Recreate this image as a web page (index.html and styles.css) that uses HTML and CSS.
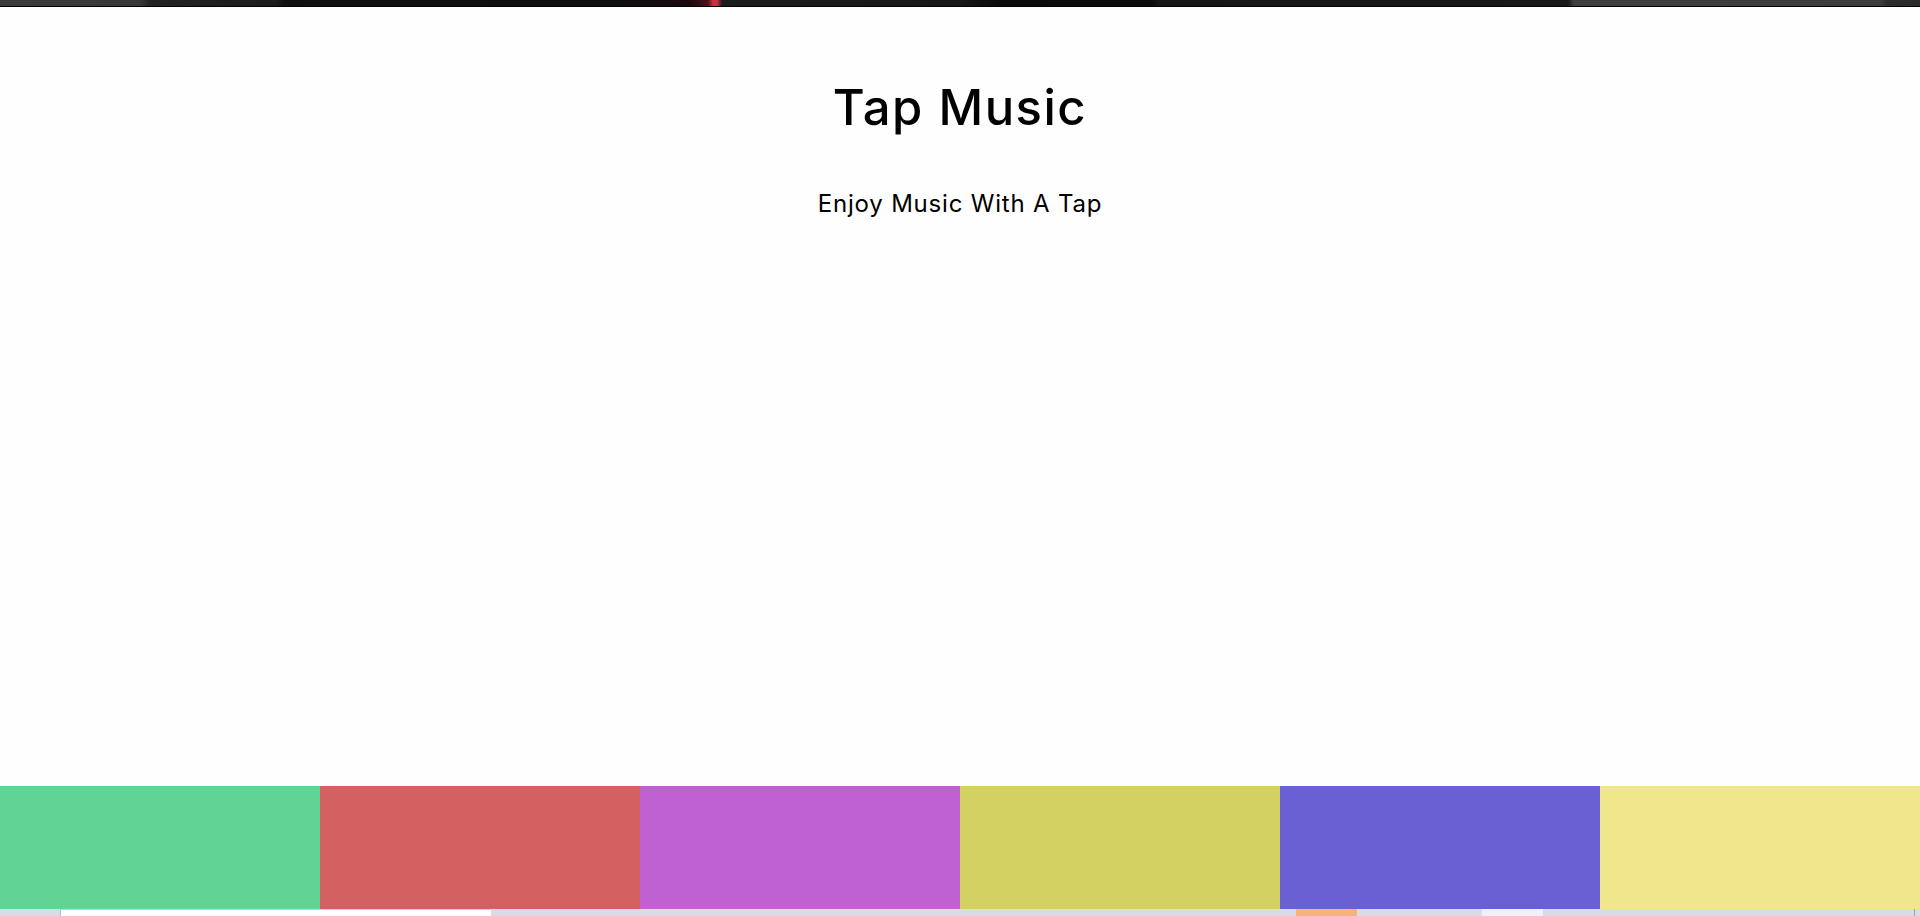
FILE: index.html
```html
<!DOCTYPE html>
<html lang="en">
<head>
<meta charset="utf-8">
<title>Tap Music</title>
<link rel="stylesheet" href="styles.css">
</head>
<body>
<div class="page">
  <div class="topband"></div>
  <header class="header">
    <h1 class="title">Tap Music</h1>
    <p class="subtitle">Enjoy Music With A Tap</p>
  </header>
  <div class="pads">
    <div class="pad pad1"></div>
    <div class="pad pad2"></div>
    <div class="pad pad3"></div>
    <div class="pad pad4"></div>
    <div class="pad pad5"></div>
    <div class="pad pad6"></div>
  </div>
  <div class="taskbar">
    <span class="tb-gap"></span>
    <span class="tb-field"></span>
    <span class="tb-gap"></span>
    <span class="tb-orange"></span>
    <span class="tb-gap"></span>
    <span class="tb-light"></span>
    <span class="tb-gap"></span>
    <span class="tb-line"></span>
    <span class="tb-gap"></span>
  </div>
</div>
</body>
</html>
```

FILE: styles.css
```css
html, body {
  margin: 0;
  padding: 0;
  background: #fefefe;
}
.page {
  width: 1920px;
  height: 916px;
  display: flex;
  flex-direction: column;
  overflow: hidden;
  font-family: "Inter", "Open Sans", sans-serif;
  color: #000;
}
.topband {
  height: 6px;
  border-bottom: 1px solid #000;
  background: linear-gradient(to right,
    #3b3b3b 0px, #383838 140px, #222 150px, #1c1c1c 275px, #111 285px,
    #0f0f0f 600px, #1a0a0c 690px, #4a1018 708px, #c8323f 713px, #c8323f 717px,
    #1c1c1c 722px, #171717 960px, #0a0a0a 1000px, #0b0b0b 1150px, #161616 1160px,
    #181818 1568px, #3e3e3e 1574px, #3c3c3c 1880px, #2c2c2c 1888px, #2a2a2a 1920px);
}
.header {
  flex: 1;
  display: flex;
  flex-direction: column;
  align-items: center;
}
.title {
  margin: 72px 0 0;
  font-size: 49px;
  font-weight: 500;
  line-height: 58px;
  letter-spacing: 1.5px;
}
.subtitle {
  margin: 52px 0 0;
  font-size: 24px;
  font-weight: 400;
  line-height: 29px;
  letter-spacing: 0.8px;
}
.pads {
  height: 123px;
  display: flex;
}
.pad {
  flex: 1;
}
.pad1 { background: #61d395; }
.pad2 { background: #d36161; }
.pad3 { background: #c061d3; }
.pad4 { background: #d3d161; }
.pad5 { background: #6961d3; }
.pad6 { background: #f0e68c; }
.taskbar {
  height: 7px;
  background: #d8dce9;
  display: grid;
  grid-template-columns: 60px 431px 805px 61px 125px 61px 371px 1px 5px;
}
.tb-field {
  background: #fff;
  border-left: 1px solid #b8bcc8;
  border-top: 1px solid #d0d2d8;
}
.tb-orange { background: #f7b27a; }
.tb-light { background: #eff1f7; }
.tb-line { background: #9aa0ae; }
```
